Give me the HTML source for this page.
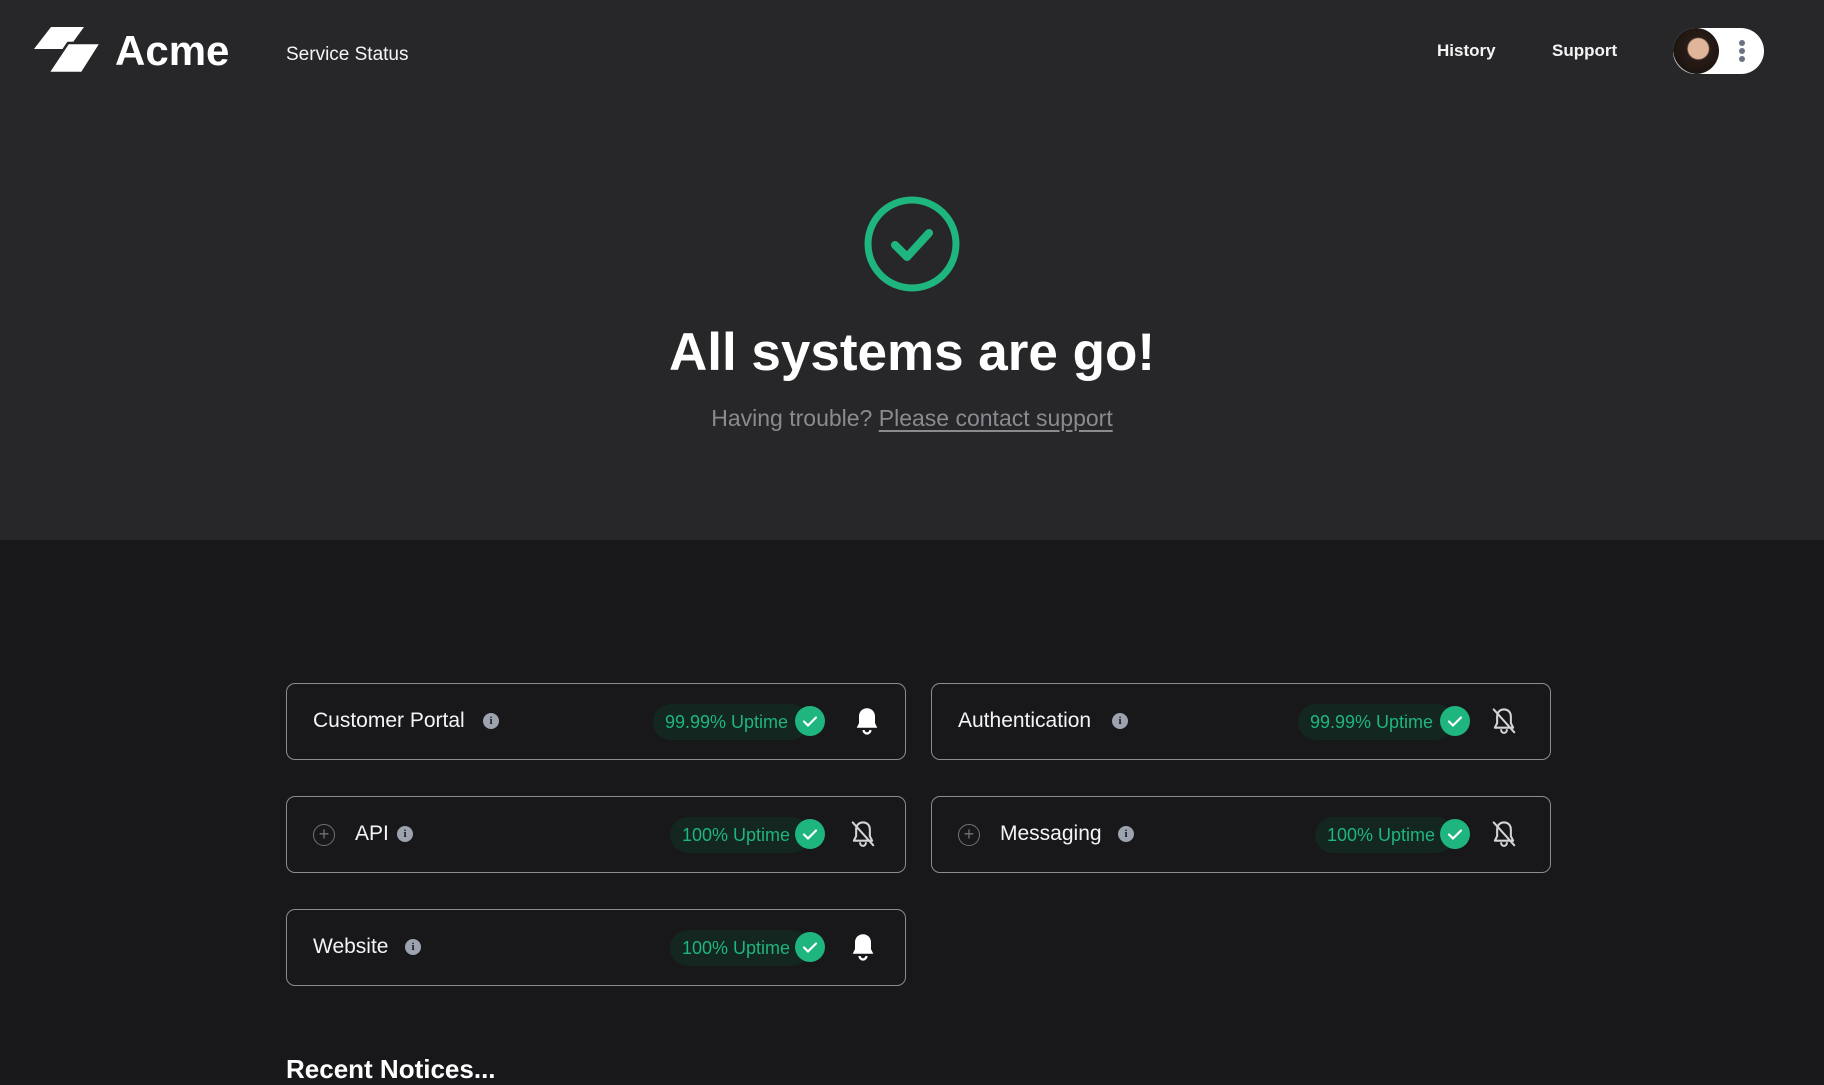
<!DOCTYPE html>
<html><head><meta charset="utf-8"><style>
*{margin:0;padding:0;box-sizing:border-box}
body{width:1824px;height:1080px;overflow:hidden;background:#18181b;font-family:"Liberation Sans",sans-serif;color:#fff;position:relative}
.top{position:absolute;left:0;top:0;width:1824px;height:540px;background:#27272a}
.abs{position:absolute}
.card{position:absolute;width:620px;height:77px;border:1.5px solid #8b8b90;border-radius:9px}
.name{position:absolute;top:0;line-height:74px;font-size:21px;color:#f4f4f5}
.info{position:absolute;top:29px;width:16px;height:16px;border-radius:50%;background:#9ca3af;color:#18181b;font:bold 11px/16px "Liberation Serif",serif;text-align:center}
.pill{position:absolute;top:20px;height:36px;border-radius:18px;background:#13261f;color:#1fb57f;font-size:18px;line-height:36px;padding-left:12px}
.ck{position:absolute;top:22px;width:30px;height:30px;border-radius:50%;background:#1fb57f}
.bell{position:absolute;top:22px}
.plus{position:absolute;left:26px;top:27px;width:22px;height:22px;border:1.5px solid #71717a;border-radius:50%;color:#71717a;font-size:18px;line-height:18px;text-align:center}
</style></head><body>
<div class="top"></div>
<svg class="abs" style="left:34px;top:27px" width="68" height="48" viewBox="0 0 68 48"><polygon points="17,0 50,0 34,22 0,22" fill="#fff"/><polygon points="34,16 67,16 48,46 14,46" fill="#fff" stroke="#27272a" stroke-width="2.5" stroke-linejoin="miter"/></svg>
<div class="abs" style="left:115px;top:26px;font-size:42px;font-weight:bold;line-height:50px">Acme</div>
<div class="abs" style="left:286px;top:43px;font-size:19px;line-height:24px;color:#f4f4f5">Service Status</div>
<div class="abs" style="left:1437px;top:41px;font-size:17px;font-weight:bold;color:#f4f4f5">History</div>
<div class="abs" style="left:1552px;top:41px;font-size:17px;font-weight:bold;color:#f4f4f5">Support</div>
<div class="abs" style="left:1673px;top:28px;width:91px;height:46px;border-radius:23px;background:#fff"></div>
<div class="abs" style="left:1673px;top:28px;width:46px;height:46px;border-radius:50%;background:radial-gradient(circle at 55% 45%,#e0b59a 0 28%,#2a1c18 32%,#1b1410 70%,#cfd3c8 72%)"></div>
<div class="abs" style="left:1739px;top:40px;width:6px;height:6px;border-radius:50%;background:#6b7280;box-shadow:0 8px 0 #6b7280,0 16px 0 #6b7280"></div>
<svg class="abs" style="left:863px;top:195px" width="98" height="98"><circle cx="49" cy="49" r="44" fill="none" stroke="#1fb57f" stroke-width="7"/><path d="M32 50 L44 62 L66 38" fill="none" stroke="#1fb57f" stroke-width="8" stroke-linecap="round" stroke-linejoin="round"/></svg>
<div class="abs" style="left:0;width:1824px;top:320px;text-align:center;font-size:53px;font-weight:bold;line-height:66px">All systems are go!</div>
<div class="abs" style="left:0;width:1824px;top:405px;text-align:center;font-size:23px;color:#8a8a90">Having trouble? <span style="text-decoration:underline;text-underline-offset:4px">Please contact support</span></div>

<div class="card" style="left:286px;top:683px"><div class="name" style="left:26px">Customer Portal</div><div class="info" style="left:196px">i</div><div class="pill" style="left:366px;width:156px">99.99% Uptime</div><div class="ck" style="left:508px"><svg width="30" height="30"><path d="M9 15.5l4 4 8-8" fill="none" stroke="#fff" stroke-width="2.2" stroke-linecap="round"/></svg></div><svg class="bell" style="left:566px" width="28" height="32" viewBox="0 0 24 28"><path d="M12 2c-4 0-7 3-7 7v6l-2 4h18l-2-4V9c0-4-3-7-7-7z" fill="#fff"/><path d="M9 21a3 3 0 0 0 6 0" fill="none" stroke="#fff" stroke-width="2"/></svg></div>
<div class="card" style="left:931px;top:683px"><div class="name" style="left:26px">Authentication</div><div class="info" style="left:180px">i</div><div class="pill" style="left:366px;width:156px">99.99% Uptime</div><div class="ck" style="left:508px"><svg width="30" height="30"><path d="M9 15.5l4 4 8-8" fill="none" stroke="#fff" stroke-width="2.2" stroke-linecap="round"/></svg></div><svg class="bell" style="left:558px" width="28" height="32" viewBox="0 0 24 28"><path d="M12 3c-4 0-6 3-6 6v6l-2 4h16l-2-4V9c0-3-2-6-6-6zM9.5 21a2.5 2.5 0 0 0 5 0M3 3l18 20" fill="none" stroke="#d4d4d8" stroke-width="1.8" stroke-linecap="round" stroke-linejoin="round"/></svg></div>
<div class="card" style="left:286px;top:796px"><div class="plus">+</div><div class="name" style="left:68px">API</div><div class="info" style="left:110px">i</div><div class="pill" style="left:383px;width:140px">100% Uptime</div><div class="ck" style="left:508px"><svg width="30" height="30"><path d="M9 15.5l4 4 8-8" fill="none" stroke="#fff" stroke-width="2.2" stroke-linecap="round"/></svg></div><svg class="bell" style="left:562px" width="28" height="32" viewBox="0 0 24 28"><path d="M12 3c-4 0-6 3-6 6v6l-2 4h16l-2-4V9c0-3-2-6-6-6zM9.5 21a2.5 2.5 0 0 0 5 0M3 3l18 20" fill="none" stroke="#d4d4d8" stroke-width="1.8" stroke-linecap="round" stroke-linejoin="round"/></svg></div>
<div class="card" style="left:931px;top:796px"><div class="plus">+</div><div class="name" style="left:68px">Messaging</div><div class="info" style="left:186px">i</div><div class="pill" style="left:383px;width:140px">100% Uptime</div><div class="ck" style="left:508px"><svg width="30" height="30"><path d="M9 15.5l4 4 8-8" fill="none" stroke="#fff" stroke-width="2.2" stroke-linecap="round"/></svg></div><svg class="bell" style="left:558px" width="28" height="32" viewBox="0 0 24 28"><path d="M12 3c-4 0-6 3-6 6v6l-2 4h16l-2-4V9c0-3-2-6-6-6zM9.5 21a2.5 2.5 0 0 0 5 0M3 3l18 20" fill="none" stroke="#d4d4d8" stroke-width="1.8" stroke-linecap="round" stroke-linejoin="round"/></svg></div>
<div class="card" style="left:286px;top:909px"><div class="name" style="left:26px">Website</div><div class="info" style="left:118px">i</div><div class="pill" style="left:383px;width:140px">100% Uptime</div><div class="ck" style="left:508px"><svg width="30" height="30"><path d="M9 15.5l4 4 8-8" fill="none" stroke="#fff" stroke-width="2.2" stroke-linecap="round"/></svg></div><svg class="bell" style="left:562px" width="28" height="32" viewBox="0 0 24 28"><path d="M12 2c-4 0-7 3-7 7v6l-2 4h18l-2-4V9c0-4-3-7-7-7z" fill="#fff"/><path d="M9 21a3 3 0 0 0 6 0" fill="none" stroke="#fff" stroke-width="2"/></svg></div>

<div class="abs" style="left:286px;top:1053px;font-size:26px;font-weight:bold;line-height:32px">Recent Notices...</div>
</body></html>
